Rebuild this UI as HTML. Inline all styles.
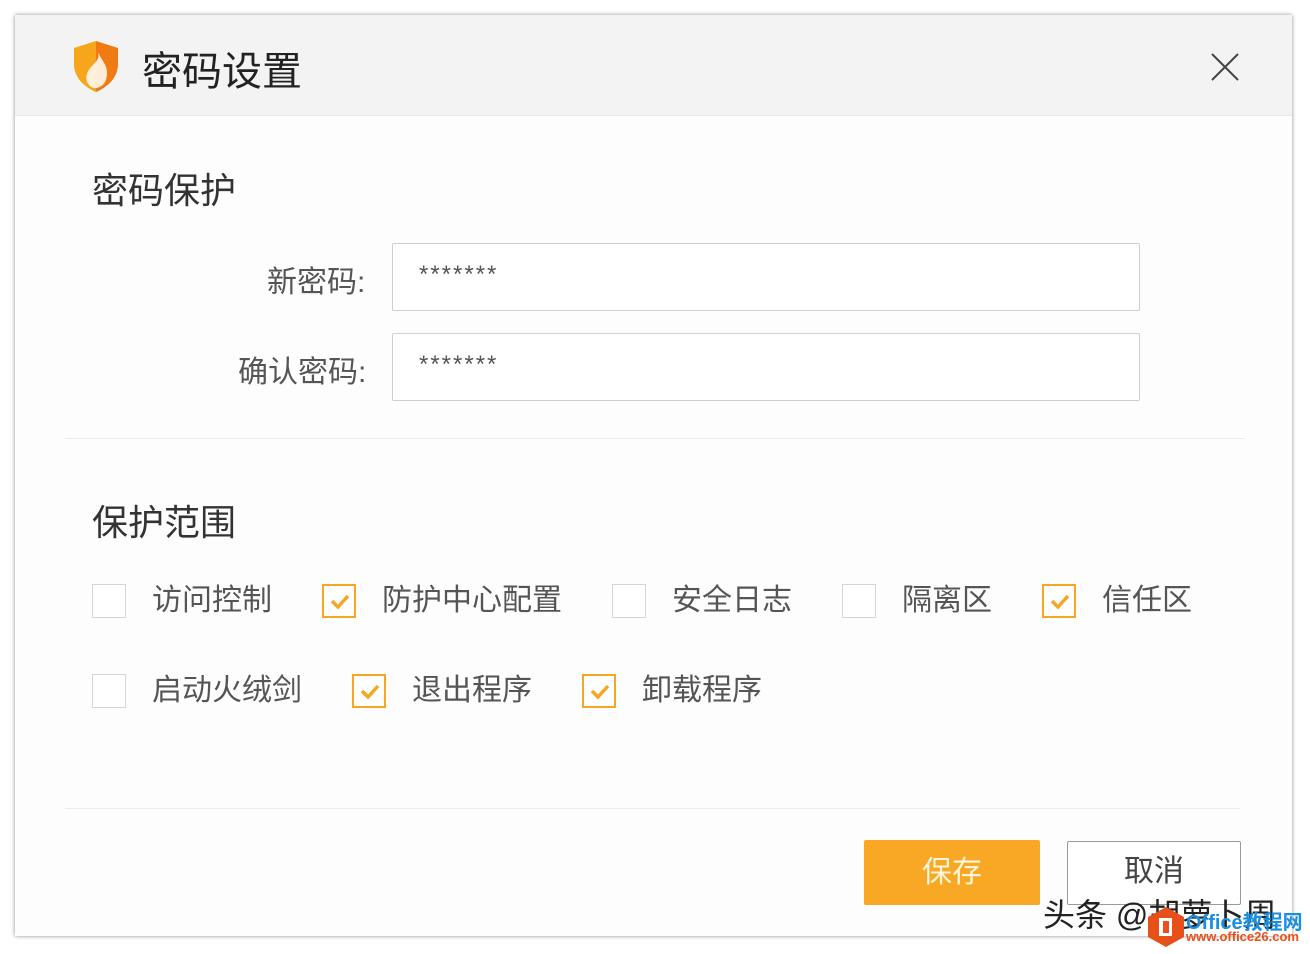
<!DOCTYPE html>
<html><head><meta charset="utf-8"><style>
body{margin:0;width:1310px;height:954px;background:#fff;position:relative;overflow:hidden;font-family:"Liberation Sans","Noto Sans CJK SC",sans-serif;}
.dlg{position:absolute;left:15px;top:15px;width:1277px;height:921px;background:#fdfdfd;box-shadow:0 0 4px rgba(0,0,0,.45);}
.hd{position:absolute;left:0;top:0;width:100%;height:100px;background:#f3f3f3;border-bottom:1px solid #e8e8e8;}
.t{position:absolute;white-space:nowrap;}
.cb{position:absolute;width:34px;height:34px;border:1px solid #d6d6d6;background:#fff;box-sizing:border-box;}
.cb.on{border:2px solid #f5a623;}
.cb.on svg{position:absolute;left:6px;top:7px;}
.lab{position:absolute;font-size:30px;color:#555;white-space:nowrap;line-height:34px;}
.inp{position:absolute;left:377px;width:748px;height:68px;border:1px solid #cfcfcf;border-radius:2px;background:#fff;box-sizing:border-box;}
.stars{position:absolute;left:26px;top:17px;font-size:24px;color:#555;letter-spacing:2px;}
</style></head><body>
<div class="dlg">
<div class="hd">
<svg style="position:absolute;left:57px;top:25px" width="48" height="53" viewBox="0 0 48 53">
<path d="M2 8 L24 1 L24 52 C10 46 2 36 2 24 Z" fill="#f7a51a"/>
<path d="M24 1 L46 8 L46 24 C46 36 38 46 24 52 Z" fill="#f07b12"/>
<path d="M26 12 C30 22 38 26 34 40 C31 48 22 50 18 46 C12 40 14 32 20 26 C24 22 28 18 26 12 Z" fill="#fff3e6" opacity=".95"/>
</svg>
<div class="t" style="left:127px;top:24px;font-size:40px;color:#222;">密码设置</div>
<svg style="position:absolute;left:1195px;top:37px" width="30" height="30"><path d="M2 2L28 28M28 2L2 28" stroke="#444" stroke-width="2"/></svg>
</div>
<div class="t" style="left:77px;top:147px;font-size:36px;color:#333;">密码保护</div>
<div class="t" style="left:252px;top:242px;font-size:30px;color:#555;">新密码:</div>
<div class="inp" style="top:228px"><span class="stars">*******</span></div>
<div class="t" style="left:223px;top:332px;font-size:30px;color:#555;">确认密码:</div>
<div class="inp" style="top:318px"><span class="stars">*******</span></div>
<div style="position:absolute;left:50px;top:423px;width:1180px;height:1px;background:#ececec"></div>
<div class="t" style="left:77px;top:479px;font-size:36px;color:#333;">保护范围</div>

<div class="cb" style="left:77px;top:569px"></div><div class="lab" style="left:137px;top:569px">访问控制</div>
<div class="cb on" style="left:307px;top:569px"><svg width="20" height="17"><path d="M2 8L8 14L18 3" stroke="#f5a623" stroke-width="3.5" fill="none"/></svg></div><div class="lab" style="left:367px;top:569px">防护中心配置</div>
<div class="cb" style="left:597px;top:569px"></div><div class="lab" style="left:657px;top:569px">安全日志</div>
<div class="cb" style="left:827px;top:569px"></div><div class="lab" style="left:887px;top:569px">隔离区</div>
<div class="cb on" style="left:1027px;top:569px"><svg width="20" height="17"><path d="M2 8L8 14L18 3" stroke="#f5a623" stroke-width="3.5" fill="none"/></svg></div><div class="lab" style="left:1087px;top:569px">信任区</div>

<div class="cb" style="left:77px;top:659px"></div><div class="lab" style="left:137px;top:659px">启动火绒剑</div>
<div class="cb on" style="left:337px;top:659px"><svg width="20" height="17"><path d="M2 8L8 14L18 3" stroke="#f5a623" stroke-width="3.5" fill="none"/></svg></div><div class="lab" style="left:397px;top:659px">退出程序</div>
<div class="cb on" style="left:567px;top:659px"><svg width="20" height="17"><path d="M2 8L8 14L18 3" stroke="#f5a623" stroke-width="3.5" fill="none"/></svg></div><div class="lab" style="left:627px;top:659px">卸载程序</div>

<div style="position:absolute;left:50px;top:793px;width:1175px;height:1px;background:#ececec"></div>
<div style="position:absolute;left:849px;top:825px;width:176px;height:65px;background:#f9a825;border-radius:2px;color:#fff6dc;font-size:30px;text-align:center;line-height:65px;">保存</div>
<div style="position:absolute;left:1052px;top:826px;width:174px;height:64px;border:1px solid #9a9a9a;border-radius:2px;box-sizing:border-box;color:#444;font-size:30px;text-align:center;line-height:60px;background:#fff;">取消</div>
</div>
<div class="t" style="left:1043px;top:890px;font-size:32px;color:#222;">头条 @胡萝卜周</div>
<svg style="position:absolute;left:1146px;top:906px" width="40" height="42"><path d="M20 1L38 11V31L20 41L2 31V11Z" fill="#e8501a"/><rect x="13" y="12" width="13" height="18" fill="#fff"/><rect x="17" y="15" width="6" height="12" fill="#e8501a"/></svg>
<div class="t" style="left:1186px;top:906px;font-size:20px;font-weight:bold;color:#1a8fe0;">Office教程网</div>
<div class="t" style="left:1186px;top:929px;font-size:13px;font-weight:bold;color:#e8501a;">www.office26.com</div>
</body></html>
